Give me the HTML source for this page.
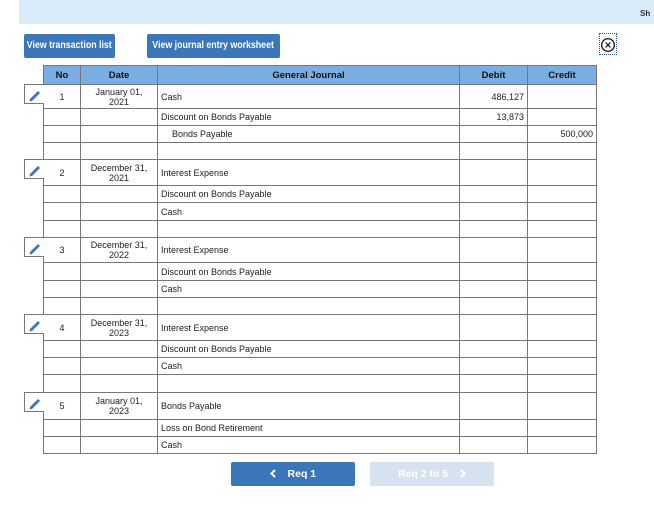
<!DOCTYPE html>
<html><head><meta charset="utf-8"><style>
*{box-sizing:border-box;margin:0;padding:0}
body{width:654px;height:524px;background:#fff;font-family:"Liberation Sans",Arial,sans-serif;position:relative;overflow:hidden}
.top{position:absolute;left:19px;top:0;width:635px;height:24px;background:#d9eaf9}
.sh{position:absolute;left:640px;top:9px;font-size:8px;font-weight:bold;color:#333}
.btn{position:absolute;top:34px;height:24px;background:#3a76b8;color:#fff;font-size:10px;font-weight:bold;line-height:24px;text-align:center;border-radius:2px;white-space:nowrap;overflow:hidden}
.btn span{display:inline-block;transform:scaleX(0.88);transform-origin:center;margin:0 -10px}
.close{position:absolute;left:599px;top:33px;width:18px;height:22px;border:1px dotted #3355aa}
.close svg{position:absolute;left:0;top:3px}
table{position:absolute;left:43px;top:65px;border-collapse:collapse;font-size:9px;color:#222}
td{border:1px solid #777;padding:0 3px;vertical-align:middle}
th{border:1px solid #777;background:#7aaee3;font-weight:bold;font-size:9.5px;color:#111}
.c{text-align:center}.r{text-align:right}
.pen{position:absolute;left:24px;width:20px;height:20px;border:1px solid #777;border-right:none;background:#fff}
.b2{position:absolute;top:462px;height:24px;width:124px;font-size:10.5px;font-weight:bold;color:#fff;text-align:center;line-height:24px;border-radius:2px}
.b2 svg{vertical-align:-1px}
</style></head><body>
<div class="top"></div><div class="sh">Sh</div>
<div class="btn" style="left:24px;width:91px"><span>View transaction list</span></div>
<div class="btn" style="left:147px;width:133px"><span>View journal entry worksheet</span></div>
<div class="close"><svg width="16" height="16" viewBox="0 0 16 16"><circle cx="8" cy="8" r="6.3" fill="none" stroke="#222" stroke-width="1.4"/><path d="M5.6 5.6 L10.4 10.4 M10.4 5.6 L5.6 10.4" stroke="#222" stroke-width="1.3"/></svg></div>
<table>
<colgroup><col style="width:37px"><col style="width:77px"><col style="width:302px"><col style="width:68px"><col style="width:69px"></colgroup>
<tr style="height:19px"><th>No</th><th>Date</th><th>General Journal</th><th>Debit</th><th>Credit</th></tr>
<tr style="height:24px"><td class="c">1</td><td class="c">January 01,<br>2021</td><td>Cash</td><td class="r">486,127</td><td></td></tr>
<tr style="height:17px"><td></td><td></td><td>Discount on Bonds Payable</td><td class="r">13,873</td><td></td></tr>
<tr style="height:17px"><td></td><td></td><td style="padding-left:14px">Bonds Payable</td><td></td><td class="r">500,000</td></tr>
<tr style="height:17px"><td></td><td></td><td></td><td></td><td></td></tr>
<tr style="height:26px"><td class="c">2</td><td class="c">December 31,<br>2021</td><td>Interest Expense</td><td></td><td></td></tr>
<tr style="height:17px"><td></td><td></td><td>Discount on Bonds Payable</td><td></td><td></td></tr>
<tr style="height:18px"><td></td><td></td><td>Cash</td><td></td><td></td></tr>
<tr style="height:17px"><td></td><td></td><td></td><td></td><td></td></tr>
<tr style="height:25px"><td class="c">3</td><td class="c">December 31,<br>2022</td><td>Interest Expense</td><td></td><td></td></tr>
<tr style="height:18px"><td></td><td></td><td>Discount on Bonds Payable</td><td></td><td></td></tr>
<tr style="height:17px"><td></td><td></td><td>Cash</td><td></td><td></td></tr>
<tr style="height:17px"><td></td><td></td><td></td><td></td><td></td></tr>
<tr style="height:26px"><td class="c">4</td><td class="c">December 31,<br>2023</td><td>Interest Expense</td><td></td><td></td></tr>
<tr style="height:17px"><td></td><td></td><td>Discount on Bonds Payable</td><td></td><td></td></tr>
<tr style="height:17px"><td></td><td></td><td>Cash</td><td></td><td></td></tr>
<tr style="height:18px"><td></td><td></td><td></td><td></td><td></td></tr>
<tr style="height:27px"><td class="c">5</td><td class="c">January 01,<br>2023</td><td>Bonds Payable</td><td></td><td></td></tr>
<tr style="height:17px"><td></td><td></td><td>Loss on Bond Retirement</td><td></td><td></td></tr>
<tr style="height:17px"><td></td><td></td><td>Cash</td><td></td><td></td></tr>
</table>
<div class="pen" style="top:84px"><svg width="20" height="20" viewBox="0 0 20 20"><path d="M5 14 L13 6 L15 8 L7 16 L4.5 16.5 Z" fill="#3a76b8"/></svg></div>
<div class="pen" style="top:159px"><svg width="20" height="20" viewBox="0 0 20 20"><path d="M5 14 L13 6 L15 8 L7 16 L4.5 16.5 Z" fill="#3a76b8"/></svg></div>
<div class="pen" style="top:237px"><svg width="20" height="20" viewBox="0 0 20 20"><path d="M5 14 L13 6 L15 8 L7 16 L4.5 16.5 Z" fill="#3a76b8"/></svg></div>
<div class="pen" style="top:314px"><svg width="20" height="20" viewBox="0 0 20 20"><path d="M5 14 L13 6 L15 8 L7 16 L4.5 16.5 Z" fill="#3a76b8"/></svg></div>
<div class="pen" style="top:392px"><svg width="20" height="20" viewBox="0 0 20 20"><path d="M5 14 L13 6 L15 8 L7 16 L4.5 16.5 Z" fill="#3a76b8"/></svg></div>
<div class="b2" style="left:231px;background:#3a76b8"><svg width="6" height="9" viewBox="0 0 6 9"><path d="M5 1 L1.5 4.5 L5 8" fill="none" stroke="#fff" stroke-width="2"/></svg>&nbsp;&nbsp;&nbsp; Req 1</div>
<div class="b2" style="left:370px;background:#d6e2f0">Req 2 to 5 &nbsp;&nbsp;&nbsp;<svg width="6" height="9" viewBox="0 0 6 9"><path d="M1 1 L4.5 4.5 L1 8" fill="none" stroke="#fff" stroke-width="2"/></svg></div>
</body></html>
